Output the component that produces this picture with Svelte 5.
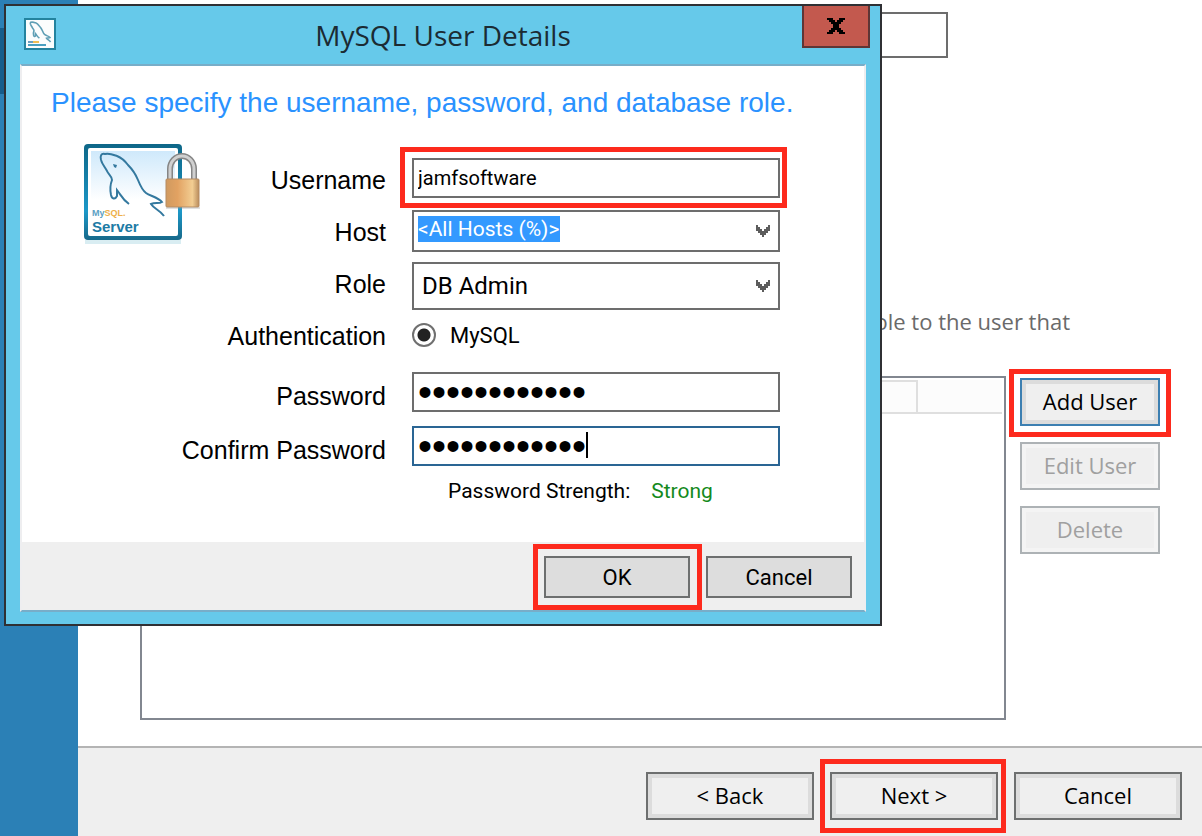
<script lang="ts">
	let username = $state('jamfsoftware');
	let host = $state('<All Hosts (%)>');
	let role = $state('DB Admin');
	let auth = $state('mysql');
	let password = $state('softwarejamf');
	let confirm = $state('softwarejamf');

	const HOSTS = ['<All Hosts (%)>'];
	const ROLES = ['DB Admin'];
</script>

{#snippet dolphin()}
	<path
		d="M17 16C16 12 17 9 21 10C26 9 30 11 33 12C38 14 41 17 44 21C49 26 52 31 54 36C56 41 58 46 62 49C66 52 74 53 78 58C75 60 71 58 67 60C70 65 76 66 80 72"
	/>
	<path
		d="M17 16C18 20 21 23 23 27C24 30 28 32 28 36C26 41 26 46 27 51C28 55 31 56 33 52L33 46C37 51 38 55 45 60"
	/>
{/snippet}

{#snippet chevron()}
	<svg class="chevron" viewBox="0 0 14 12" aria-hidden="true">
		<path d="M0 0h2v2h2v2h2v2h2V4h2V2h2V0h2v6h-2v2h-2v2H8v2H6v-2H4V8H2V6H0z" />
	</svg>
{/snippet}

<div class="installer">
	<aside><div class="step"></div></aside>

	<div class="page">
		<main>
			<input class="root" type="text" aria-label="Root password" />
			<p>role to the user that</p>
			<div class="accounts">
				<div class="list">
					<table>
						<thead>
							<tr><th></th><th></th></tr>
						</thead>
					</table>
				</div>
				<div class="actions">
					<span class="marked"><button class="btn primary" type="button">Add User</button></span>
					<button class="btn" type="button" disabled>Edit User</button>
					<button class="btn" type="button" disabled>Delete</button>
				</div>
			</div>
		</main>
		<footer>
			<button class="btn" type="button">&lt; Back</button>
			<span class="marked next"><button class="btn" type="button">Next &gt;</button></span>
			<button class="btn" type="button">Cancel</button>
		</footer>
	</div>
</div>

<div class="dialog" role="dialog" aria-labelledby="dialog-title">
	<header>
		<svg class="app-icon" viewBox="0 0 32 32" aria-hidden="true">
			<rect x="1" y="1" width="30" height="30" fill="#fbfdfd" stroke="#23839f" stroke-width="2" />
			<g
				transform="translate(1 1) scale(.32)"
				fill="none"
				stroke="#5f9fb5"
				stroke-width="5"
			>
				{@render dolphin()}
			</g>
			<path d="M4 24h5" stroke="#6b9fc0" stroke-width="2" />
			<path d="M9 24h6" stroke="#efbd55" stroke-width="2" />
			<path d="M4 27h18" stroke="#4a9fc0" stroke-width="2" />
		</svg>
		<h1 id="dialog-title">MySQL User Details</h1>
		<button class="close" type="button" aria-label="Close">
			<svg viewBox="0 0 18 16" aria-hidden="true">
				<path
					d="M0 0h6v2h2v2h2V2h2V0h6v2h-2v2h-2v2h-2v4h2v2h2v2h2v2h-6v-2h-2v-2H8v2H6v2H0v-2h2v-2h2v-2h2V6H4V4H2V2H0z"
				/>
			</svg>
		</button>
	</header>

	<form onsubmit={(e) => e.preventDefault()}>
		<h2>Please specify the username, password, and database role.</h2>

		<div class="content">
			<svg class="server" viewBox="0 0 118 102" aria-hidden="true">
				<defs>
					<linearGradient id="sky" x1="0" y1="0" x2="0" y2="1">
						<stop offset="0" stop-color="#cfe9fb" />
						<stop offset=".6" stop-color="#fff" />
					</linearGradient>
					<linearGradient id="frame" x1="0" y1="0" x2="0" y2="1">
						<stop offset="0" stop-color="#0e6788" />
						<stop offset=".7" stop-color="#1c98c8" />
						<stop offset="1" stop-color="#17698a" />
					</linearGradient>
					<linearGradient id="brass">
						<stop offset="0" stop-color="#d09a60" />
						<stop offset=".35" stop-color="#e2a262" />
						<stop offset=".8" stop-color="#f2cd92" />
						<stop offset="1" stop-color="#b98c5c" />
					</linearGradient>
				</defs>
				<rect x="1" y="96" width="96" height="4" fill="#d9edf2" />
				<rect x="0" y="0" width="98" height="96" rx="4" fill="url(#frame)" />
				<rect x="4" y="4" width="90" height="88" rx="2" fill="#fff" />
				<rect x="7" y="7" width="84" height="82" fill="url(#sky)" />
				<g fill="none" stroke="#34799f" stroke-width="2">{@render dolphin()}</g>
				<path d="M29 20l4 1-1 3-2-1z" fill="#34799f" />
				<text x="8" y="72" class="brand">My<tspan>SQL.</tspan></text>
				<text x="8" y="88" class="product">Server</text>
				<path
					d="M86 36V25a12 13 0 0 1 24 0v11"
					fill="none"
					stroke="#858585"
					stroke-width="6"
				/>
				<path
					d="M86 36V25a12 13 0 0 1 24 0v11"
					fill="none"
					stroke="#d0d0d0"
					stroke-width="3"
				/>
				<rect x="82" y="35" width="33" height="28" rx="1" fill="url(#brass)" stroke="#b58b62" />
				<path d="M82 64h34" stroke="#999" stroke-opacity=".6" />
			</svg>

			<div class="fields">
				<label for="username">Username</label>
				<span class="marked user">
					<input id="username" type="text" bind:value={username} />
				</span>

				<label for="host">Host</label>
				<div class="combo host">
					<select id="host" bind:value={host}>
						{#each HOSTS as h}
							<option>{h}</option>
						{/each}
					</select>
					{@render chevron()}
				</div>

				<label for="role">Role</label>
				<div class="combo">
					<select id="role" bind:value={role}>
						{#each ROLES as r}
							<option>{r}</option>
						{/each}
					</select>
					{@render chevron()}
				</div>

				<span class="caption" id="auth-label">Authentication</span>
				<div class="radio" role="radiogroup" aria-labelledby="auth-label">
					<input id="auth-mysql" type="radio" name="auth" value="mysql" bind:group={auth} />
					<label for="auth-mysql">MySQL</label>
				</div>

				<label class="tall" for="password">Password</label>
				<input id="password" type="password" bind:value={password} />

				<label class="tall" for="confirm">Confirm Password</label>
				<div class="active">
					<input id="confirm" type="password" bind:value={confirm} />
					<span class="caret"></span>
				</div>

				<div class="strength">
					<span>Password Strength:</span>
					<output>Strong</output>
				</div>
			</div>
		</div>

		<div class="buttons">
			<span class="marked ok"><button type="submit">OK</button></span>
			<button type="button">Cancel</button>
		</div>
	</form>
</div>

<style>
	:global(body) {
		margin: 0;
		background: #fff;
	}
	button,
	input,
	select,
	h1,
	h2,
	p {
		box-sizing: border-box;
		margin: 0;
		padding: 0;
		font: inherit;
		color: inherit;
	}
	.installer {
		display: grid;
		grid-template-columns: 78px 1fr;
		min-height: 100vh;
		font-family: 'Open Sans', 'Noto Sans', sans-serif;
		font-size: 22px;
		color: #000;
	}
	aside {
		background: #2b80b6;
		padding-top: 28px;
	}
	.step {
		height: 66px;
		background: #165d8c;
	}
	.page {
		display: flex;
		flex-direction: column;
	}
	main {
		flex: 1;
		display: flex;
		flex-direction: column;
		padding: 12px 42px 26px 62px;
	}
	.root {
		align-self: flex-end;
		width: 500px;
		height: 46px;
		margin-right: 212px;
		border: 2px solid #6d6d6d;
	}
	main p {
		margin: 247px 90px 39px 0;
		line-height: 32px;
		text-align: right;
		color: #6a6a6a;
	}
	.accounts {
		flex: 1;
		display: flex;
		gap: 14px;
	}
	.list {
		flex: 1;
		border: 2px solid #828790;
		padding: 2px;
	}
	table {
		width: 100%;
		border-collapse: separate;
		border-spacing: 0;
	}
	th {
		height: 30px;
		padding: 0;
		background: #fcfcfc;
		border-bottom: 2px solid #dfdfdf;
	}
	th:first-child {
		border-top: 2px solid #dfdfdf;
		border-right: 2px solid #dfdfdf;
	}
	th:last-child {
		width: 84px;
	}
	.actions {
		display: flex;
		flex-direction: column;
		gap: 16px;
		width: 140px;
		padding-top: 2px;
	}
	.btn {
		width: 100%;
		height: 48px;
		padding-bottom: 2px;
		border: 2px solid #6d6f6f;
		background: #efefef;
		box-shadow: inset 0 0 0 4px #dcdcdc;
	}
	.btn.primary {
		border-color: #3c7fb1;
	}
	.btn:disabled {
		border-color: #adb2b5;
		box-shadow: inset 0 0 0 4px #f4f4f4;
		color: #a0a0a0;
	}
	footer {
		display: grid;
		grid-template-columns: repeat(3, 168px);
		justify-content: end;
		gap: 16px;
		padding: 24px 20px 16px;
		background: #efefef;
		border-top: 2px solid #b4b4b4;
	}

	/* red call-outs around the controls to use */
	.marked {
		position: relative;
		display: block;
	}
	.marked::after {
		content: '';
		position: absolute;
		inset: -9px -11px -11px;
		border: 5px solid #fd2a1d;
		pointer-events: none;
	}
	.marked.next::after {
		inset: -13px -8px -13px -10px;
	}
	.marked.user::after {
		inset: -11px -7px -10px -12px;
	}
	.marked.ok::after {
		inset: -12px -12px -12px -11px;
	}

	.dialog {
		position: absolute;
		top: 4px;
		left: 4px;
		box-sizing: border-box;
		width: 878px;
		padding-bottom: 12px;
		border: 2px solid #2f3034;
		background: #66c9ea;
		font-family: Roboto, 'Liberation Sans', sans-serif;
		font-size: 22px;
		color: #000;
	}
	header {
		display: grid;
		grid-template-columns: 68px 1fr 68px;
		height: 58px;
		padding: 0 10px;
		font-family: 'Open Sans', 'Noto Sans', sans-serif;
	}
	.app-icon {
		width: 32px;
		height: 32px;
		margin: 12px 8px;
	}
	h1 {
		font-size: 28px;
		line-height: 58px;
		font-weight: 400;
		text-align: center;
		color: #1b2b33;
	}
	.close {
		display: grid;
		place-items: center;
		height: 42px;
		border: 2px solid #5f3535;
		border-top: 0;
		background: #c3594e;
	}
	.close svg {
		width: 18px;
		height: 16px;
	}
	form {
		margin: 0 14px;
		border: 2px solid #78adc8;
		border-left-color: #eeeef0;
		border-right-color: #eeeef0;
		background: #fff;
	}
	h2 {
		padding: 20px 29px 24px;
		font-family: 'Liberation Sans', Arial, sans-serif;
		font-size: 28px;
		line-height: 34px;
		font-weight: 400;
		color: #2a92ff;
	}
	.content {
		display: flex;
		padding: 0 84px 10px 62px;
	}
	.server {
		flex: none;
		width: 118px;
		height: 102px;
	}
	.brand,
	.product {
		font-family: 'Liberation Sans', Arial, sans-serif;
		font-weight: 700;
		font-size: 9px;
		fill: #5b9fc4;
	}
	.brand tspan {
		fill: #eeb04a;
	}
	.product {
		font-size: 15px;
		fill: #1c7ba5;
	}
	.fields {
		flex: 1;
		display: grid;
		grid-template-columns: minmax(0, 1fr) 368px;
		grid-template-rows: 52px 52px 52px 58px 54px 54px 52px;
		column-gap: 26px;
		align-items: start;
		padding-top: 14px;
	}
	.fields > label,
	.caption {
		justify-self: end;
		font-family: 'Liberation Sans', Arial, sans-serif;
		font-size: 25px;
		line-height: 44px;
		white-space: nowrap;
	}
	.fields > .tall {
		line-height: 48px;
	}
	.fields input:not([type='radio']) {
		display: block;
		width: 100%;
		height: 40px;
		padding: 0 4px;
		border: 2px solid #6d6d6d;
		background: #fff;
	}
	.fields input[type='text'] {
		font-size: 20px;
	}
	.fields input[type='password'] {
		font-family: 'Liberation Sans', Arial, sans-serif;
		font-size: 40px;
	}
	.combo {
		box-sizing: border-box;
		display: flex;
		align-items: center;
		height: 48px;
		padding: 0 8px;
		border: 2px solid #6d6d6d;
		font-size: 24px;
	}
	.combo.host {
		height: 42px;
		padding-left: 4px;
		font-size: 21px;
	}
	select {
		appearance: none;
		flex: 1;
		height: 28px;
		border: 0;
		background: none;
	}
	.host select {
		flex: none;
		align-self: flex-start;
		height: 26px;
		margin-top: 4px;
		background: #3399ff;
		color: #fff;
	}
	option {
		background: #fff;
		color: #000;
	}
	.chevron {
		width: 14px;
		height: 12px;
		margin-left: auto;
		fill: #5c5c5c;
	}
	.radio {
		display: flex;
		align-items: center;
		gap: 14px;
		height: 42px;
	}
	.radio input {
		appearance: none;
		width: 24px;
		height: 24px;
		border: 2px solid #707070;
		border-radius: 50%;
		background: #fff;
	}
	.radio input:checked {
		background: radial-gradient(circle, #222 6px, #fff 7px);
	}
	.active {
		position: relative;
	}
	.fields .active input {
		border-color: #2a6594;
	}
	.caret {
		position: absolute;
		top: 6px;
		left: 174px;
		width: 2px;
		height: 26px;
		background: #000;
	}
	.strength {
		grid-column: 2;
		display: flex;
		gap: 21px;
		padding-left: 36px;
		font-size: 21px;
		line-height: 22px;
	}
	output {
		color: #148a1c;
	}
	.buttons {
		display: flex;
		justify-content: flex-end;
		gap: 16px;
		padding: 14px 12px 12px;
		background: #efefef;
	}
	.buttons button {
		display: block;
		width: 146px;
		height: 42px;
		border: 2px solid #6d6f6f;
		background: #ddd;
	}
</style>
